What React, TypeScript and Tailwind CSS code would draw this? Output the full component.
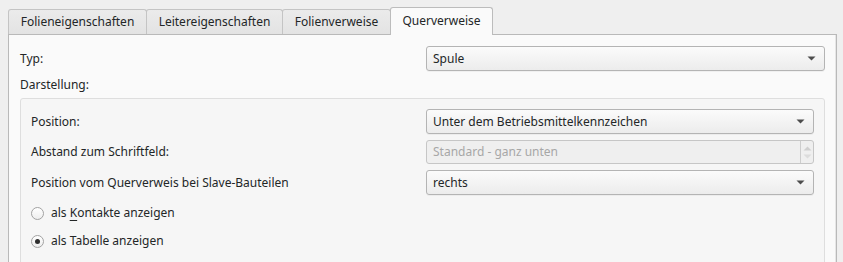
import React from "react";

const Arrow = () => (
  <svg width="9" height="5" viewBox="0 0 9 5" className="shrink-0">
    <path d="M0.5 0.5 L8.5 0.5 L4.5 4.5 Z" fill="#4d4d4d" />
  </svg>
);

const Combo = ({ text }: { text: string }) => (
  <div className="flex h-[25px] flex-1 items-center justify-between rounded-[3px] border border-[#b4b4b4] bg-gradient-to-b from-[#fbfbfb] to-[#ececec] pl-[6px] pr-[8px] text-[#232627] shadow-[0_1px_0_rgba(0,0,0,0.04)]">
    <span>{text}</span>
    <Arrow />
  </div>
);

const Spin = ({ text }: { text: string }) => (
  <div className="flex h-[24px] flex-1 items-stretch rounded-[3px] border border-[#c6c6c6] bg-[#efefef] text-[#a7a7a7]">
    <div className="flex flex-1 items-center pl-[6px]">{text}</div>
    <div className="flex w-[13px] flex-col items-center justify-center gap-[3px] border-l border-[#cdcdcd]">
      <svg width="9" height="5" viewBox="0 0 9 5">
        <path d="M0.5 4.5 L8.5 4.5 L4.5 0.5 Z" fill="#cfcfcf" />
      </svg>
      <svg width="9" height="5" viewBox="0 0 9 5">
        <path d="M0.5 0.5 L8.5 0.5 L4.5 4.5 Z" fill="#dcdcdc" />
      </svg>
    </div>
  </div>
);

const Radio = ({ checked, children }: { checked?: boolean; children: React.ReactNode }) => (
  <div className="flex h-[28px] items-center">
    <div className="flex h-[13px] w-[13px] items-center justify-center rounded-full border border-[#a2a2a2] bg-gradient-to-b from-[#ffffff] to-[#eeeeee]">
      {checked && <div className="h-[5px] w-[5px] rounded-full bg-[#2e2e2e]" />}
    </div>
    <span className="ml-[7px]">{children}</span>
  </div>
);

export default function App() {
  const tabClass =
    "flex h-[25px] items-center justify-center rounded-t-[3px] border border-b-0 border-[#c4c4c4] bg-gradient-to-b from-[#ebebeb] to-[#e3e3e3]";
  return (
    <div
      className="h-[262px] w-[843px] overflow-hidden bg-[#efefef] text-[12px] leading-none text-[#232627]"
      style={{ fontFamily: '"Noto Sans", "Open Sans", sans-serif' }}
    >
      <div className="flex items-end pl-[8px] pt-[7px]">
        <div className={`${tabClass} w-[139px]`}>Folieneigenschaften</div>
        <div className={`${tabClass} -ml-px w-[137px]`}>Leitereigenschaften</div>
        <div className={`${tabClass} -ml-px w-[109px]`}>Folienverweise</div>
        <div className="relative z-10 -mb-px -ml-px flex h-[28px] w-[103px] items-center justify-center rounded-t-[3px] border border-b-0 border-[#bcbcbc] bg-[#fafafa] pb-[1px]">
          Querverweise
        </div>
      </div>
      <div className="ml-[8px] h-[240px] w-[829px] border border-[#b9b9b9] bg-[#fafafa] px-[11px] pt-[11px] shadow-[inset_-1px_0_0_#e6e6e6]">
        <div className="flex items-center">
          <div className="w-[406px]">Typ:</div>
          <Combo text="Spule" />
        </div>
        <div className="flex h-[27px] items-center">Darstellung:</div>
        <div className="rounded-[3px] border border-[#dedede] bg-[#f6f6f6] px-[10px] pt-[10px]">
          <div className="flex items-center">
            <div className="w-[395px]">Position:</div>
            <Combo text="Unter dem Betriebsmittelkennzeichen" />
          </div>
          <div className="mt-[6px] flex items-center">
            <div className="w-[395px]">Abstand zum Schriftfeld:</div>
            <Spin text="Standard - ganz unten" />
          </div>
          <div className="mt-[6px] flex items-center">
            <div className="w-[395px]">Position vom Querverweis bei Slave-Bauteilen</div>
            <Combo text="rechts" />
          </div>
          <div className="pt-[4px]">
            <Radio>
              als <span className="underline underline-offset-[3px]">K</span>ontakte anzeigen
            </Radio>
            <Radio checked>als Tabelle anzeigen</Radio>
          </div>
          <div className="h-[20px]" />
        </div>
      </div>
    </div>
  );
}
